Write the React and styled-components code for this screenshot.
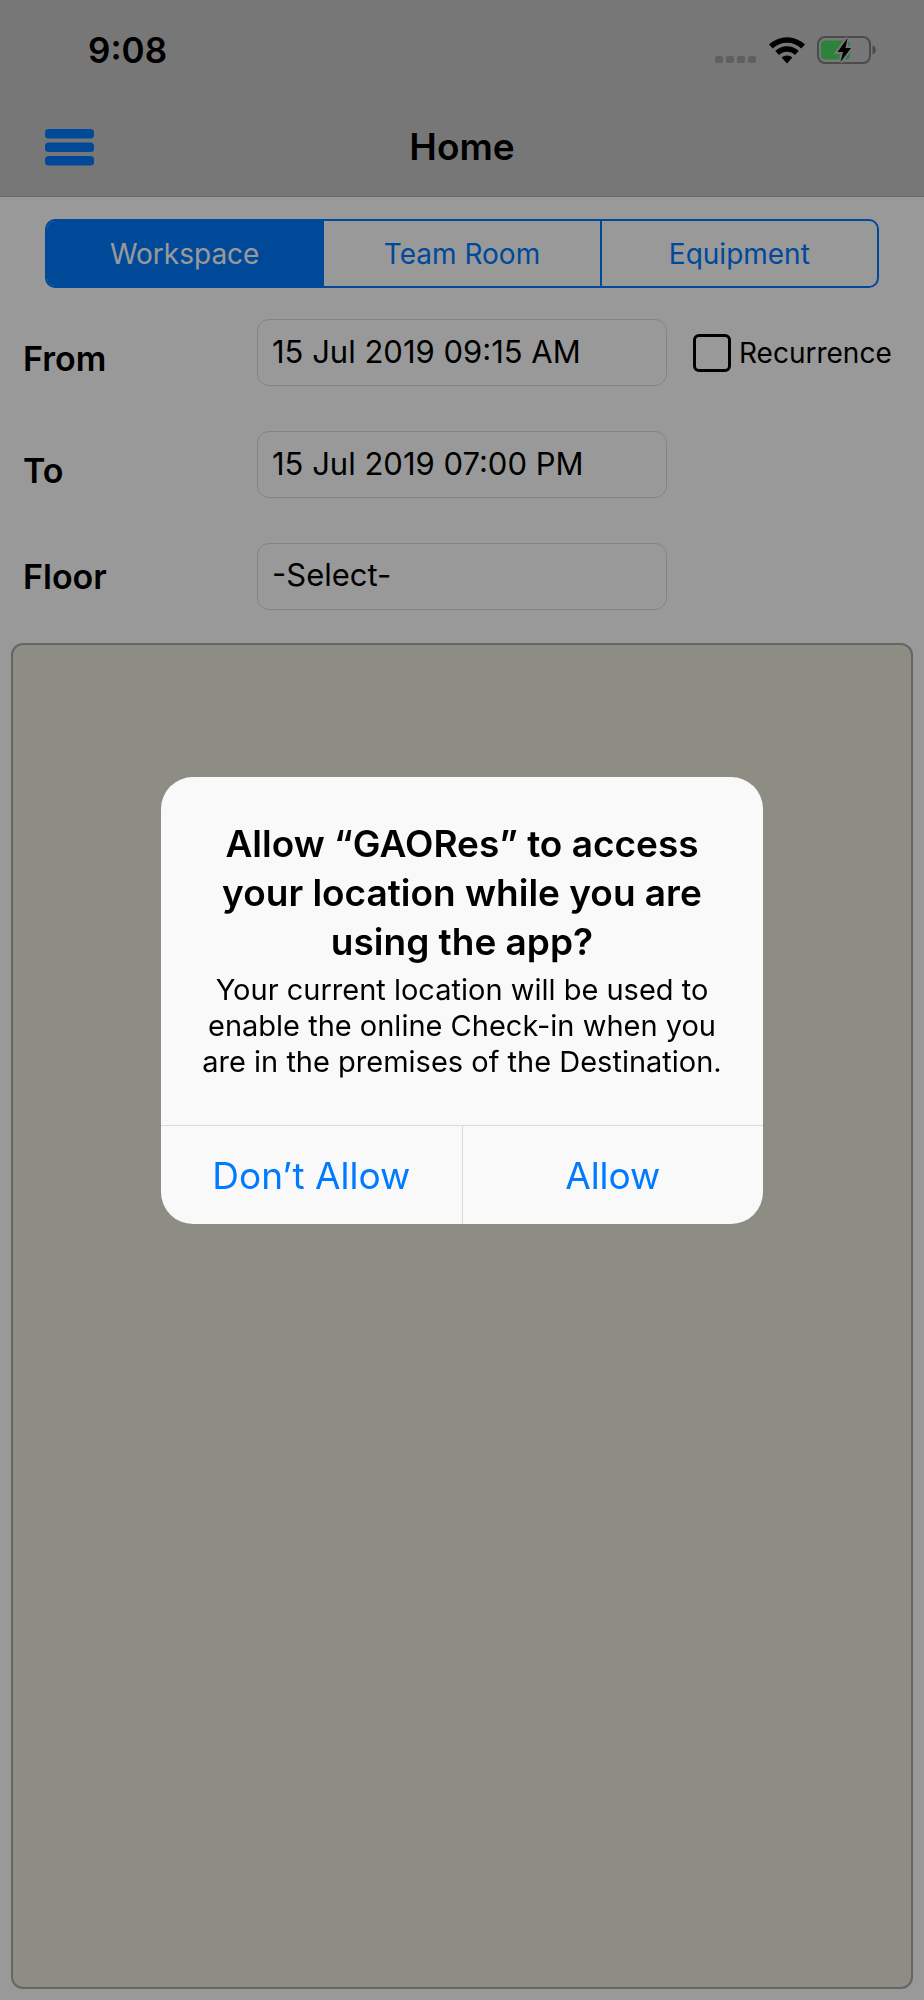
import React, { useState } from 'react';
import styled, { createGlobalStyle, ThemeProvider } from 'styled-components';

const theme = {
  blue: '#007aff',
  bar: '#c6c6c6',
  line: '#dadada',
  map: '#ebebda',
  font: 'Inter, "Liberation Sans", sans-serif'
};

const GlobalStyle = createGlobalStyle`
  * {
    box-sizing: border-box;
  }
  body {
    margin: 0;
    background: #fff;
    color: #000;
    font-family: ${props => props.theme.font};
  }
  button, input, select {
    font-family: inherit;
    color: inherit;
    margin: 0;
  }
`;

const Screen = styled.div`
  display: flex;
  flex-direction: column;
  min-height: 100vh;
`;

const Header = styled.header`
  background: ${props => props.theme.bar};
  border-bottom: 1px solid #b0b0b0;
`;

const StatusBar = styled.div`
  display: flex;
  align-items: center;
  justify-content: space-between;
  height: 100px;
  padding: 0 47px 0 88px;
`;

const Time = styled.span`
  font-size: 35px;
  line-height: 44px;
  font-weight: 600;
`;

const StatusIcons = styled.div`
  display: flex;
  align-items: center;
  gap: 12px;
`;

const NavBar = styled.div`
  display: grid;
  grid-template-columns: 1fr auto 1fr;
  align-items: center;
  height: 96px;
  padding: 0 45px 2px;
`;

const MenuButton = styled.button`
  display: flex;
  justify-self: start;
  padding: 0;
  border: 0;
  background: none;
`;

const NavTitle = styled.h1`
  margin: 0;
  font-size: 37px;
  line-height: 44px;
  font-weight: 600;
`;

const Segments = styled.div`
  display: flex;
  margin: 22px 45px 31px;
  border: 2px solid ${props => props.theme.blue};
  border-radius: 10px;
  overflow: hidden;
`;

const Segment = styled.button`
  flex: 1;
  height: 65px;
  padding: 0;
  border: 0;
  background: ${props => (props.$active ? props.theme.blue : 'transparent')};
  color: ${props => (props.$active ? '#fff' : props.theme.blue)};
  font-size: 28px;
  line-height: 36px;

  & + & {
    border-left: 2px solid ${props => props.theme.blue};
  }
`;

const Form = styled.form`
  display: flex;
  flex-direction: column;
  gap: 45px;
  padding: 0 23px;
`;

const Row = styled.div`
  display: grid;
  grid-template-columns: 234fr 410fr 234fr;
  align-items: center;
`;

const Label = styled.label`
  padding-top: ${props => (props.$low ? '12px' : '0')};
  font-size: 34px;
  line-height: 44px;
  font-weight: 600;
`;

const Field = styled.input`
  width: 100%;
  height: 67px;
  padding: 0 14px 3px;
  border: 1px solid ${props => props.theme.line};
  border-radius: 12px;
  background: transparent;
  font-size: 31px;
  line-height: 36px;
  appearance: none;
`;

const Recurrence = styled.label`
  display: flex;
  align-items: center;
  gap: 8px;
  padding-left: 26px;
  font-size: 28px;
  line-height: 36px;
`;

const CheckBox = styled.input`
  flex: none;
  width: 38px;
  height: 38px;
  margin: 0;
  border: 3px solid #000;
  border-radius: 6px;
  appearance: none;

  &:checked {
    background: #000;
  }
`;

const FloorPlan = styled.main`
  flex: 1;
  margin: 33px 11px 11px;
  border: 2px solid #a8a8a8;
  border-radius: 12px;
  background: ${props => props.theme.map};
`;

const Overlay = styled.div`
  position: fixed;
  inset: 0;
  display: flex;
  align-items: center;
  justify-content: center;
  background: rgba(0, 0, 0, 0.4);
`;

const Dialog = styled.section`
  width: 602px;
  max-width: 90%;
  border-radius: 32px;
  background: #f9f9f9;
  text-align: center;
  overflow: hidden;
`;

const DialogBody = styled.div`
  padding: 42px 32px 45px;
`;

const DialogTitle = styled.h2`
  margin: 0 0 6px;
  font-size: 37px;
  line-height: 49px;
  font-weight: 600;
`;

const DialogText = styled.p`
  margin: 0;
  font-size: 29px;
  line-height: 36px;
`;

const DialogActions = styled.div`
  display: flex;
  border-top: 1px solid ${props => props.theme.line};
`;

const DialogButton = styled.button`
  flex: 1;
  height: 98px;
  padding: 2px 0 0;
  border: 0;
  background: none;
  color: ${props => props.theme.blue};
  font-size: 37px;
  line-height: 44px;

  & + & {
    border-left: 1px solid ${props => props.theme.line};
  }
`;

const SignalIcon = () => (
  <svg width="42" height="26" viewBox="0 0 42 26" fill="#9e9e9e" aria-hidden="true">
    {[0, 11, 22, 33].map(x => (
      <rect key={x} x={x} y="19" width="8" height="7" rx="2" />
    ))}
  </svg>
);

const WifiIcon = () => (
  <svg width="36" height="27" viewBox="0 0 36 27" aria-hidden="true">
    <path d="M0 7.6A26 26 0 0 1 36 7.6L32.2 11.4A20.5 20.5 0 0 0 3.8 11.4Z" />
    <path d="M6.2 14A17 17 0 0 1 29.8 14L25.9 17.9A11.5 11.5 0 0 0 10.1 17.9Z" />
    <path d="M12.6 20.6A8 8 0 0 1 23.4 20.6L18 26.4Z" />
  </svg>
);

const BatteryIcon = () => (
  <svg width="60" height="28" viewBox="0 0 60 28" aria-hidden="true">
    <rect x="1" y="1" width="52" height="26" rx="7" fill="none" stroke="#7d7d7d" strokeWidth="2" />
    <path d="M55.5 9.5C60 11 60 17 55.5 18.5Z" fill="#7d7d7d" />
    <rect x="4" y="4.500" width="29" height="19" rx="4" fill="#4cd964" />
    <path
      d="M30.5 2L20.5 16H26L23.5 26L34 12H28.500Z"
      stroke="#c6c6c6"
      strokeWidth="4"
      paintOrder="stroke"
    />
  </svg>
);

const MenuIcon = () => (
  <svg width="49" height="37" viewBox="0 0 49 37" fill="#007aff" aria-hidden="true">
    <rect y="0" width="49" height="9.500" rx="3.500" />
    <rect y="13.500" width="49" height="9.500" rx="3.500" />
    <rect y="27" width="49" height="9.500" rx="3.500" />
  </svg>
);

const tabs = ['Workspace', 'Team Room', 'Equipment'];

const App = () => {
  const [tab, setTab] = useState(tabs[0]);
  const [open, setOpen] = useState(true);
  const close = () => setOpen(false);

  return (
    <ThemeProvider theme={theme}>
      <GlobalStyle />
      <Screen>
        <Header>
          <StatusBar>
            <Time>9:08</Time>
            <StatusIcons>
              <SignalIcon />
              <WifiIcon />
              <BatteryIcon />
            </StatusIcons>
          </StatusBar>
          <NavBar>
            <MenuButton type="button" aria-label="Menu">
              <MenuIcon />
            </MenuButton>
            <NavTitle>Home</NavTitle>
          </NavBar>
        </Header>
        <Segments>
          {tabs.map(name => (
            <Segment
              key={name}
              type="button"
              $active={name === tab}
              aria-pressed={name === tab}
              onClick={() => setTab(name)}
            >
              {name}
            </Segment>
          ))}
        </Segments>
        <Form>
          <Row>
            <Label htmlFor="from" $low>From</Label>
            <Field id="from" type="text" defaultValue="15 Jul 2019 09:15 AM" />
            <Recurrence htmlFor="recurrence">
              <CheckBox id="recurrence" type="checkbox" />
              Recurrence
            </Recurrence>
          </Row>
          <Row>
            <Label htmlFor="to" $low>To</Label>
            <Field id="to" type="text" defaultValue="15 Jul 2019 07:00 PM" />
          </Row>
          <Row>
            <Label htmlFor="floor">Floor</Label>
            <Field as="select" id="floor">
              <option>-Select-</option>
            </Field>
          </Row>
        </Form>
        <FloorPlan />
      </Screen>
      {open && (
        <Overlay>
          <Dialog role="alertdialog" aria-modal="true" aria-labelledby="alert-title" aria-describedby="alert-text">
            <DialogBody>
              <DialogTitle id="alert-title">
                Allow “GAORes” to access your location while you are using the app?
              </DialogTitle>
              <DialogText id="alert-text">
                Your current location will be used to enable the online Check-in when you are in the
                premises of the Destination.
              </DialogText>
            </DialogBody>
            <DialogActions>
              <DialogButton type="button" onClick={close}>Don’t Allow</DialogButton>
              <DialogButton type="button" onClick={close}>Allow</DialogButton>
            </DialogActions>
          </Dialog>
        </Overlay>
      )}
    </ThemeProvider>
  );
};

export default App;
